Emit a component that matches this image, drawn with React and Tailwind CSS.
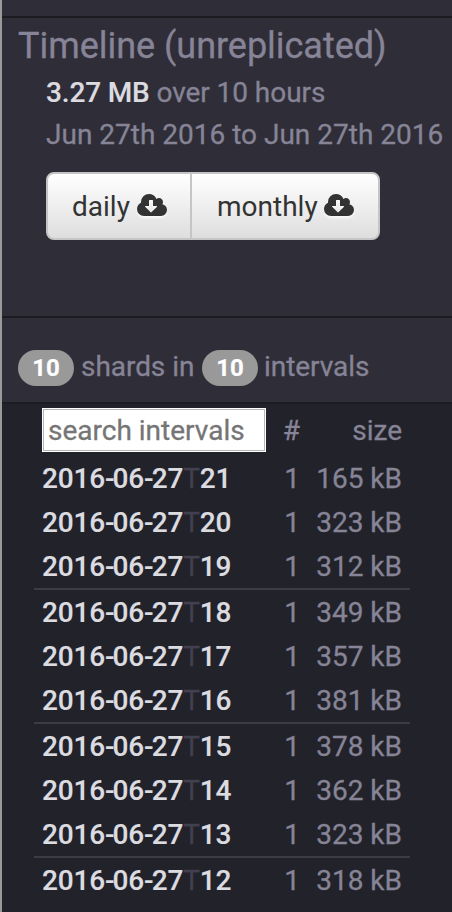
const intervals = [
  ["21", "165 kB"], ["20", "323 kB"], ["19", "312 kB"],
  ["18", "349 kB"], ["17", "357 kB"], ["16", "381 kB"],
  ["15", "378 kB"], ["14", "362 kB"], ["13", "323 kB"],
  ["12", "318 kB"],
];

function CloudDownload() {
  return (
    <svg
      viewBox="0 0 1920 1792"
      fill="currentColor"
      className="mb-[2px] h-[28px] w-[30px] shrink-0 drop-shadow-[0_2px_1px_rgba(255,255,255,0.75)]"
    >
      <path d="M1280 928q0-14-9-23t-23-9h-224V544q0-13-9.5-22.5T992 512H800q-13 0-22.5 9.5T768 544v352H544q-13 0-22.5 9.5T512 928q0 14 9 23l352 352q9 9 23 9t23-9l351-351q10-12 10-24zm640 224q0 159-112.5 271.5T1536 1536H448q-185 0-316.5-131.5T0 1088q0-130 70-240t188-165q-2-30-2-43 0-212 150-362t362-150q156 0 285.5 87T1242 446q71-62 166-62 106 0 181 75t75 181q0 76-41 138 130 31 213.5 135.5T1920 1152z" />
    </svg>
  );
}

function Badge({ children }) {
  return (
    <span className="flex h-9 w-14 items-center justify-center rounded-full bg-[#999999] text-[24px] font-bold leading-9 text-white [-webkit-text-stroke:0.2px]">
      {children}
    </span>
  );
}

function Hyphen() {
  return <span className="tracking-[-2px]">-</span>;
}

export default function App() {
  return (
    <main className="h-[912px] w-[452px] overflow-hidden border-l-2 border-[#999b99] bg-[#22222a] font-['Roboto',sans-serif] text-[28px] leading-[46px] whitespace-nowrap text-[#868496] [-webkit-text-stroke:0.3px]">
      <div className="h-[18px] border-b-2 border-[#1b1b22] bg-[#2f2e38]" />

      <section className="h-[300px] border-b-2 border-[#1b1b22] bg-[#2f2e38] pl-4">
        <h1 className="h-[52px] text-[36px] leading-[56px] tracking-[-0.03px]">Timeline (unreplicated)</h1>
        <div className="pl-7">
          <p className="h-[42px] tracking-[-0.06px]">
            <span className="font-medium tracking-[-0.15px] text-[#dcdce0] [-webkit-text-stroke:0.15px]">3.27 MB</span> over 10 hours
          </p>
          <p className="h-[60px]">Jun 27th 2016 to Jun 27th 2016</p>
          <div className="flex h-[68px] w-[334px] overflow-hidden rounded-lg border-2 border-[#c5c5c5] bg-linear-to-b from-white to-[#dedede] text-[#333333] [-webkit-text-stroke:0px] [text-shadow:0_2px_2px_rgba(255,255,255,0.75)]">
            <button className="flex w-[144px] items-center gap-[7px] border-r-2 border-[#c5c5c5] pt-[2px] pl-6">
              daily
              <CloudDownload />
            </button>
            <button className="flex flex-1 items-center gap-[6px] pt-[2px] pl-[25px]">
              monthly
              <CloudDownload />
            </button>
          </div>
        </div>
      </section>

      <section className="flex h-[86px] items-start gap-[7px] border-b-2 border-[#1b1b22] bg-[#2f2e38] pt-8 pl-4 leading-[34px] tracking-[-0.05px]">
        <Badge>10</Badge>
        <span className="w-[114px]">shards in</span>
        <Badge>10</Badge>
        <span className="-ml-px">intervals</span>
      </section>

      <section className="ml-8 w-[376px] pt-1">
        <header className="flex h-12 px-2">
          <input
            placeholder="search intervals"
            className="h-11 w-56 border border-white bg-white pt-px pr-[5px] pl-[5px] shadow-[inset_0_0_0_1px_#b5b5b7] outline-none placeholder:text-[#757575]"
          />
          <span className="w-[34px] text-right">#</span>
          <span className="flex-1 text-right">size</span>
        </header>
        {intervals.map(([hour, size], i) => (
          <div
            key={hour}
            className={
              i > 0 && i % 3 === 0
                ? "flex h-[46px] border-t-2 border-[#3d3c46] px-2"
                : "flex h-11 px-2"
            }
          >
            <span className="w-56 font-medium tracking-[-0.15px] text-[#dcdce0] [-webkit-text-stroke:0.15px]">
              2016<Hyphen />06<Hyphen />27<span className="font-normal text-[#41404f] [-webkit-text-stroke:0.3px]">T</span>{hour}
            </span>
            <span className="w-[34px] text-right">1</span>
            <span className="flex-1 text-right">{size}</span>
          </div>
        ))}
      </section>
    </main>
  );
}
